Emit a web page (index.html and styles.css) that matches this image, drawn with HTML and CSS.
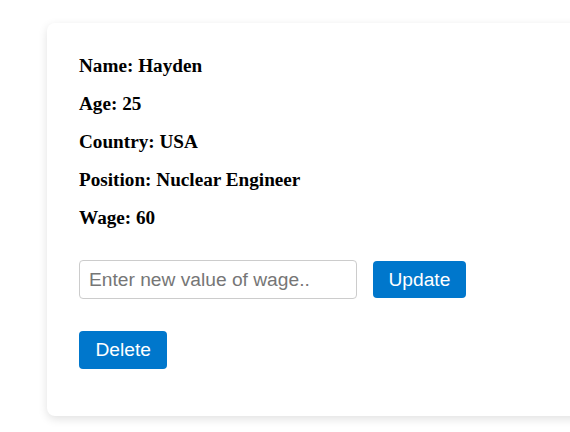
FILE: index.html
```html
<!DOCTYPE html>
<html>
<head>
<meta charset="utf-8">
<link rel="stylesheet" href="styles.css">
</head>
<body>
<div class="card">
  <p class="field">Name: Hayden</p>
  <p class="field">Age: 25</p>
  <p class="field">Country: USA</p>
  <p class="field">Position: Nuclear Engineer</p>
  <p class="field">Wage: 60</p>
  <div class="update-row">
    <input class="wage-input" type="text" placeholder="Enter new value of wage..">
    <button class="btn">Update</button>
  </div>
  <div class="delete-row">
    <button class="btn">Delete</button>
  </div>
</div>
</body>
</html>
```

FILE: styles.css
```css
html {
  overflow: hidden;
  background: #ffffff;
}
body {
  margin: 0;
  padding: 23px 0 20px 47px;
}
.card {
  width: 600px;
  box-sizing: border-box;
  padding: 32px 32px 47px 32px;
  border-radius: 8px;
  background: #ffffff;
  box-shadow: 0 3px 10px rgba(0, 0, 0, 0.12);
}
.field {
  margin: 0 0 16px 0;
  font-family: "Liberation Serif", "Times New Roman", serif;
  font-weight: bold;
  font-size: 19.2px;
  line-height: 22px;
  color: #000;
}
.update-row {
  display: flex;
  align-items: center;
  gap: 16px;
  margin-top: 31px;
}
.wage-input {
  box-sizing: border-box;
  width: 278px;
  height: 39px;
  padding: 0 9px;
  border: 1px solid #cccccc;
  border-radius: 4px;
  font-family: "Liberation Sans", Arial, sans-serif;
  font-size: 19.2px;
  color: #333;
  outline: none;
}
.wage-input::placeholder {
  color: #767676;
}
.btn {
  box-sizing: border-box;
  height: 37px;
  padding: 0 15.5px;
  border: none;
  border-radius: 4px;
  background: #0077cc;
  color: #ffffff;
  font-family: "Liberation Sans", Arial, sans-serif;
  font-size: 19.2px;
  line-height: 22px;
  cursor: pointer;
}
.delete-row {
  margin-top: 32px;
  display: flex;
}
.delete-row .btn {
  height: 38px;
  padding: 0 16.5px;
}
```
